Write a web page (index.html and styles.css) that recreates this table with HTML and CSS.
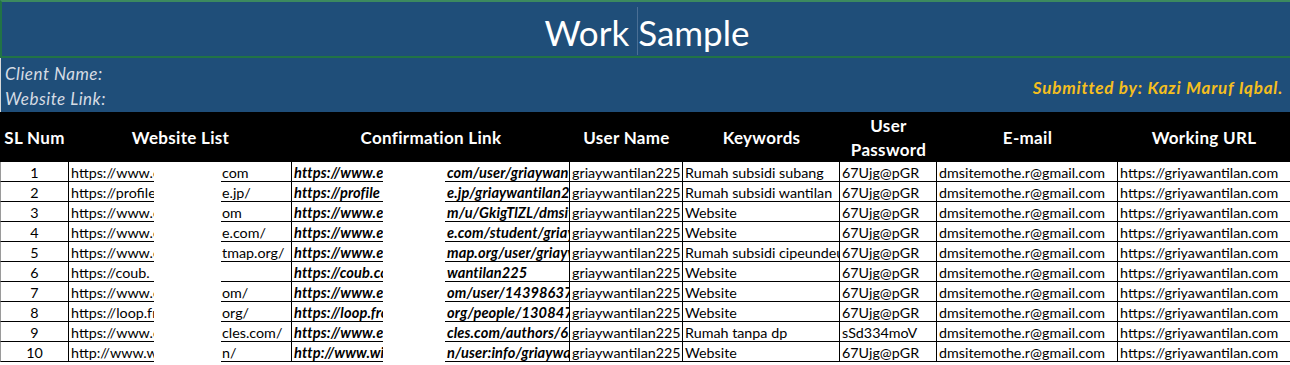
FILE: index.html
```html
<!DOCTYPE html>
<html lang="en">
<head>
<meta charset="utf-8">
<title>Work Sample</title>
<link rel="stylesheet" href="styles.css">
</head>
<body>
<div class="sheet">
  <div class="title"><span class="title-text">Work Sample</span></div>
  <div class="info">
    <div class="info-left">
      <div class="info-line">Client Name:</div>
      <div class="info-line">Website Link:</div>
    </div>
    <div class="submitted">Submitted by: Kazi Maruf Iqbal.</div>
  </div>
  <div class="grid">
    <div class="h">SL Num</div>
    <div class="h span3">Website List</div>
    <div class="h span3">Confirmation Link</div>
    <div class="h">User Name</div>
    <div class="h">Keywords</div>
    <div class="h">User<br>Password</div>
    <div class="h">E-mail</div>
    <div class="h">Working URL</div>

    <div class="c num">1</div><div class="c wl">https://www.example</div><div class="gap"></div><div class="c wr">com</div><div class="c cl">https://www.example</div><div class="gap"></div><div class="c cr">com/user/griaywantilan225</div><div class="c">griaywantilan225</div><div class="c">Rumah subsidi subang</div><div class="c">67Ujg@pGR</div><div class="c">dmsitemothe.r@gmail.com</div><div class="c last">https://griyawantilan.com</div>

    <div class="c num">2</div><div class="c wl">https://profile</div><div class="gap"></div><div class="c wr">e.jp/</div><div class="c cl">https://profile</div><div class="gap"></div><div class="c cr">e.jp/griaywantilan225</div><div class="c">griaywantilan225</div><div class="c">Rumah subsidi wantilan</div><div class="c">67Ujg@pGR</div><div class="c">dmsitemothe.r@gmail.com</div><div class="c last">https://griyawantilan.com</div>

    <div class="c num">3</div><div class="c wl">https://www.example</div><div class="gap"></div><div class="c wr">om</div><div class="c cl">https://www.example</div><div class="gap"></div><div class="c cr">m/u/GkigTlZL/dmsitemother</div><div class="c">griaywantilan225</div><div class="c">Website</div><div class="c">67Ujg@pGR</div><div class="c">dmsitemothe.r@gmail.com</div><div class="c last">https://griyawantilan.com</div>

    <div class="c num">4</div><div class="c wl">https://www.example</div><div class="gap"></div><div class="c wr">e.com/</div><div class="c cl">https://www.example</div><div class="gap"></div><div class="c cr">e.com/student/griaywantilan</div><div class="c">griaywantilan225</div><div class="c">Website</div><div class="c">67Ujg@pGR</div><div class="c">dmsitemothe.r@gmail.com</div><div class="c last">https://griyawantilan.com</div>

    <div class="c num">5</div><div class="c wl">https://www.example</div><div class="gap"></div><div class="c wr">tmap.org/</div><div class="c cl">https://www.example</div><div class="gap"></div><div class="c cr">map.org/user/griaywantilan</div><div class="c">griaywantilan225</div><div class="c">Rumah subsidi cipeundeuy</div><div class="c">67Ujg@pGR</div><div class="c">dmsitemothe.r@gmail.com</div><div class="c last">https://griyawantilan.com</div>

    <div class="c num">6</div><div class="c wl">https://coub.</div><div class="gap"></div><div class="c wr"></div><div class="c cl">https://coub.com</div><div class="gap"></div><div class="c cr">wantilan225</div><div class="c">griaywantilan225</div><div class="c">Website</div><div class="c">67Ujg@pGR</div><div class="c">dmsitemothe.r@gmail.com</div><div class="c last">https://griyawantilan.com</div>

    <div class="c num">7</div><div class="c wl">https://www.example</div><div class="gap"></div><div class="c wr">om/</div><div class="c cl">https://www.example</div><div class="gap"></div><div class="c cr">om/user/14398637</div><div class="c">griaywantilan225</div><div class="c">Website</div><div class="c">67Ujg@pGR</div><div class="c">dmsitemothe.r@gmail.com</div><div class="c last">https://griyawantilan.com</div>

    <div class="c num">8</div><div class="c wl">https://loop.frontiersin</div><div class="gap"></div><div class="c wr">org/</div><div class="c cl">https://loop.frontiersin</div><div class="gap"></div><div class="c cr">org/people/1308477</div><div class="c">griaywantilan225</div><div class="c">Website</div><div class="c">67Ujg@pGR</div><div class="c">dmsitemothe.r@gmail.com</div><div class="c last">https://griyawantilan.com</div>

    <div class="c num">9</div><div class="c wl">https://www.example</div><div class="gap"></div><div class="c wr">cles.com/</div><div class="c cl">https://www.example</div><div class="gap"></div><div class="c cr">cles.com/authors/65</div><div class="c">griaywantilan225</div><div class="c">Rumah tanpa dp</div><div class="c">sSd334moV</div><div class="c">dmsitemothe.r@gmail.com</div><div class="c last">https://griyawantilan.com</div>

    <div class="c num">10</div><div class="c wl">http://www.wiki</div><div class="gap"></div><div class="c wr">n/</div><div class="c cl">http://www.wiki</div><div class="gap"></div><div class="c cr">n/user:info/griaywantilan</div><div class="c">griaywantilan225</div><div class="c">Website</div><div class="c">67Ujg@pGR</div><div class="c">dmsitemothe.r@gmail.com</div><div class="c last">https://griyawantilan.com</div>
  </div>
</div>
</body>
</html>
```
FILE: styles.css
```css
* { box-sizing: border-box; margin: 0; padding: 0; }

html, body {
  width: 1290px;
  height: 365px;
  overflow: hidden;
  background: #ffffff;
}

body {
  font-family: Lato, "Liberation Sans", sans-serif;
  color: #000;
}

.sheet {
  width: 1290px;
}

.title {
  position: relative;
  height: 58px;
  background: #1f4e79;
  border-top: 2px solid #3c8a5f;
  border-bottom: 2px solid #217346;
  border-left: 2px solid #217346;
  display: flex;
  align-items: center;
  justify-content: center;
  color: #ffffff;
  font-size: 35px;
  line-height: 1;
}

.title-text {
  padding-top: 6px;
  padding-left: 2px;
}

.title::after {
  content: "";
  position: absolute;
  left: 635px;
  top: 5px;
  width: 1px;
  height: 48px;
  background: #4a6f95;
}

.info {
  height: 54px;
  background: #1f4e79;
  border-left: 1px solid #d9d9d9;
  display: flex;
  align-items: center;
  justify-content: space-between;
  padding: 0 7px 0 4px;
}

.info-left {
  display: flex;
  flex-direction: column;
  padding-top: 1px;
}

.info-line {
  color: #d6dce4;
  font-style: italic;
  font-size: 17px;
  letter-spacing: 0.5px;
  line-height: 25px;
}

.submitted {
  color: #f5bf1e;
  font-weight: 700;
  font-style: italic;
  font-size: 17px;
  letter-spacing: 0.8px;
  padding-top: 4px;
}

.grid {
  display: grid;
  grid-template-columns: 69px 85px 67px 71px 91px 62px 125px 113px 157px 97px 181px 172px;
  grid-template-rows: 50px;
  grid-auto-rows: 20px;
}

.h {
  background: #000;
  color: #fff;
  font-weight: 700;
  font-size: 17px;
  letter-spacing: 0.3px;
  line-height: 24px;
  padding-top: 1px;
  display: flex;
  align-items: center;
  justify-content: center;
  text-align: center;
  white-space: nowrap;
  overflow: hidden;
}

.span3 { grid-column: span 3; }

.c {
  border-bottom: 1px solid #000;
  border-right: 1px solid #000;
  font-size: 14.3px;
  line-height: 18px;
  padding-top: 2px;
  padding-left: 2px;
  white-space: nowrap;
  overflow: hidden;
}

.num {
  text-align: center;
  padding-left: 0;
  border-left: 1px solid #9a9a9a;
}

.wl, .cl { border-right: none; }

.wr { padding-left: 1px; }

.cl, .cr {
  font-weight: 700;
  font-style: italic;
  font-size: 14.6px;
  letter-spacing: 0.1px;
}

.cr { padding-left: 2px; }

.gap { background: #fff; }

.last { border-right: none; }
```
